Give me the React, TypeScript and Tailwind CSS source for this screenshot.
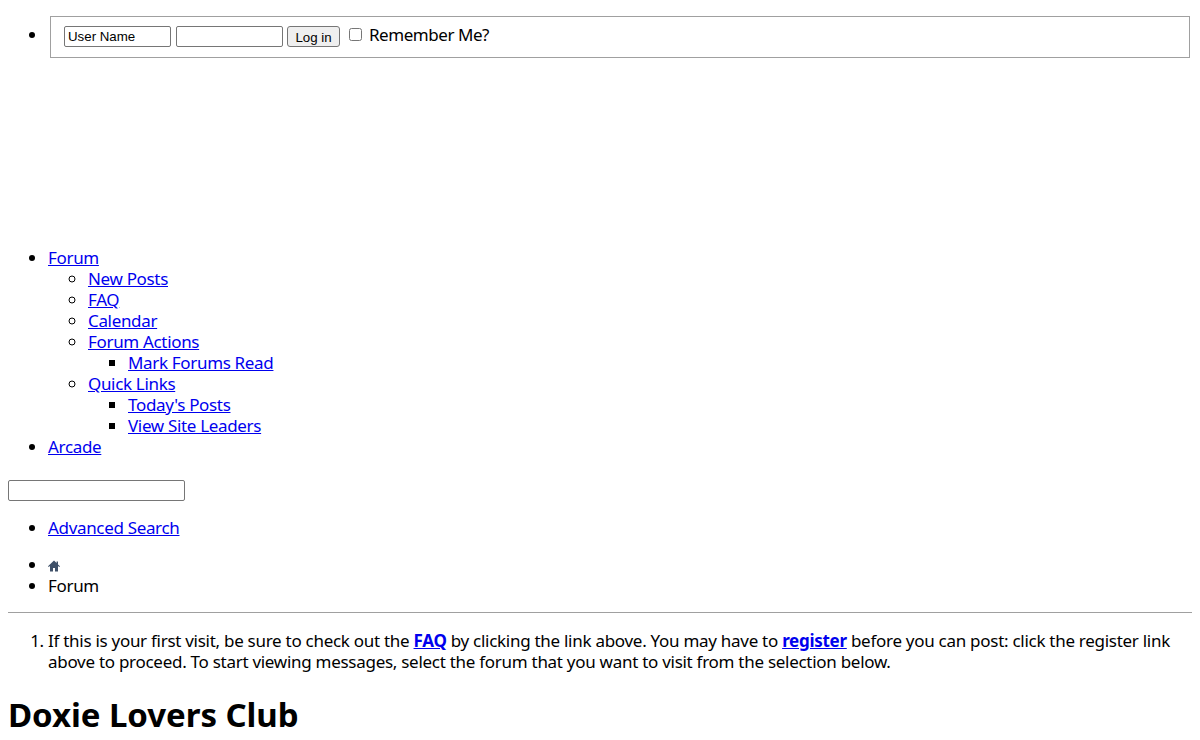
import React from 'react';

const linkCls = 'text-[#0000ee] underline';

function HomeIcon() {
  return (
    <svg viewBox="0 0 12 12" className="inline-block w-3 h-3 align-[-1px] text-[#3e5068]" fill="currentColor">
      <path d="M6 .6 0 6.2l.7.8L2 5.9V11.4h3V8h2v3.4h3V5.9L11.3 7l.7-.8-2-1.8V1.4H8.6v1.7z" />
    </svg>
  );
}

export default function App() {
  return (
    <div className="m-2 pt-2 text-[17px] tracking-[-0.33px] leading-[21px] text-black font-['Noto_Sans',sans-serif] bg-white">
      {/* Login */}
      <ul className="list-disc pl-10 mb-[189px]">
        <li>
          <div className="mx-0.5 h-[42px] border border-[#a0a0a0] pl-[13px] pb-0.5 flex items-center gap-[5px]">
            <input
              readOnly
              value="User Name"
              className="w-[107px] h-[21px] px-[3px] border border-[#767676] rounded-[2px] text-[13.3px] tracking-normal font-['Liberation_Sans',sans-serif]"
            />
            <input readOnly className="w-[107px] h-[21px] border border-[#767676] rounded-[2px]" />
            <button className="-ml-px w-[53px] h-[21px] pb-0.5 border border-[#767676] rounded-[3px] bg-[#efefef] text-[13.3px] tracking-normal font-['Liberation_Sans',sans-serif]">
              Log in
            </button>
            <input type="checkbox" className="ml-[4px] mr-[2px] w-[13px] h-[13px] -mt-1" />
            <span className="-mt-1 tracking-[-0.45px]">Remember Me?</span>
          </div>
        </li>
      </ul>

      {/* Nav */}
      <ul className="list-disc pl-10">
        <li>
          <a className={linkCls}>Forum</a>
          <ul className="list-[circle] pl-10">
            <li><a className={linkCls}>New Posts</a></li>
            <li><a className={linkCls}>FAQ</a></li>
            <li><a className={linkCls}>Calendar</a></li>
            <li>
              <a className={linkCls}>Forum Actions</a>
              <ul className="list-[square] pl-10">
                <li><a className={linkCls}>Mark Forums Read</a></li>
              </ul>
            </li>
            <li>
              <a className={linkCls}>Quick Links</a>
              <ul className="list-[square] pl-10">
                <li><a className={linkCls}>Today's Posts</a></li>
                <li><a className={linkCls}>View Site Leaders</a></li>
              </ul>
            </li>
          </ul>
        </li>
        <li><a className={linkCls}>Arcade</a></li>
      </ul>

      {/* Search */}
      <input readOnly className="block mt-[23px] w-[177px] h-[21px] border border-[#767676] rounded-[2px]" />
      <ul className="list-disc pl-10 mt-4">
        <li><a className={linkCls}>Advanced Search</a></li>
      </ul>

      {/* Breadcrumb */}
      <ul className="list-disc pl-10 mt-4">
        <li><HomeIcon /></li>
        <li>Forum</li>
      </ul>

      <hr className="mt-4 border-0 border-t border-[#a0a0a0] h-0" />

      {/* Notice */}
      <ol className="list-decimal pl-10 mt-[17px] tracking-[-0.28px]">
        <li>
          If this is your first visit, be sure to check out the <a className={`${linkCls} font-bold`}>FAQ</a> by clicking the link above. You may have to <a className={`${linkCls} font-bold`}>register</a> before you can post: click the register link above to proceed. To start viewing messages, select the forum that you want to visit from the selection below.
        </li>
      </ol>

      <h1 className="mt-[22px] text-[33px] leading-[42px] font-bold tracking-[-0.06px]">Doxie Lovers Club</h1>
    </div>
  );
}
